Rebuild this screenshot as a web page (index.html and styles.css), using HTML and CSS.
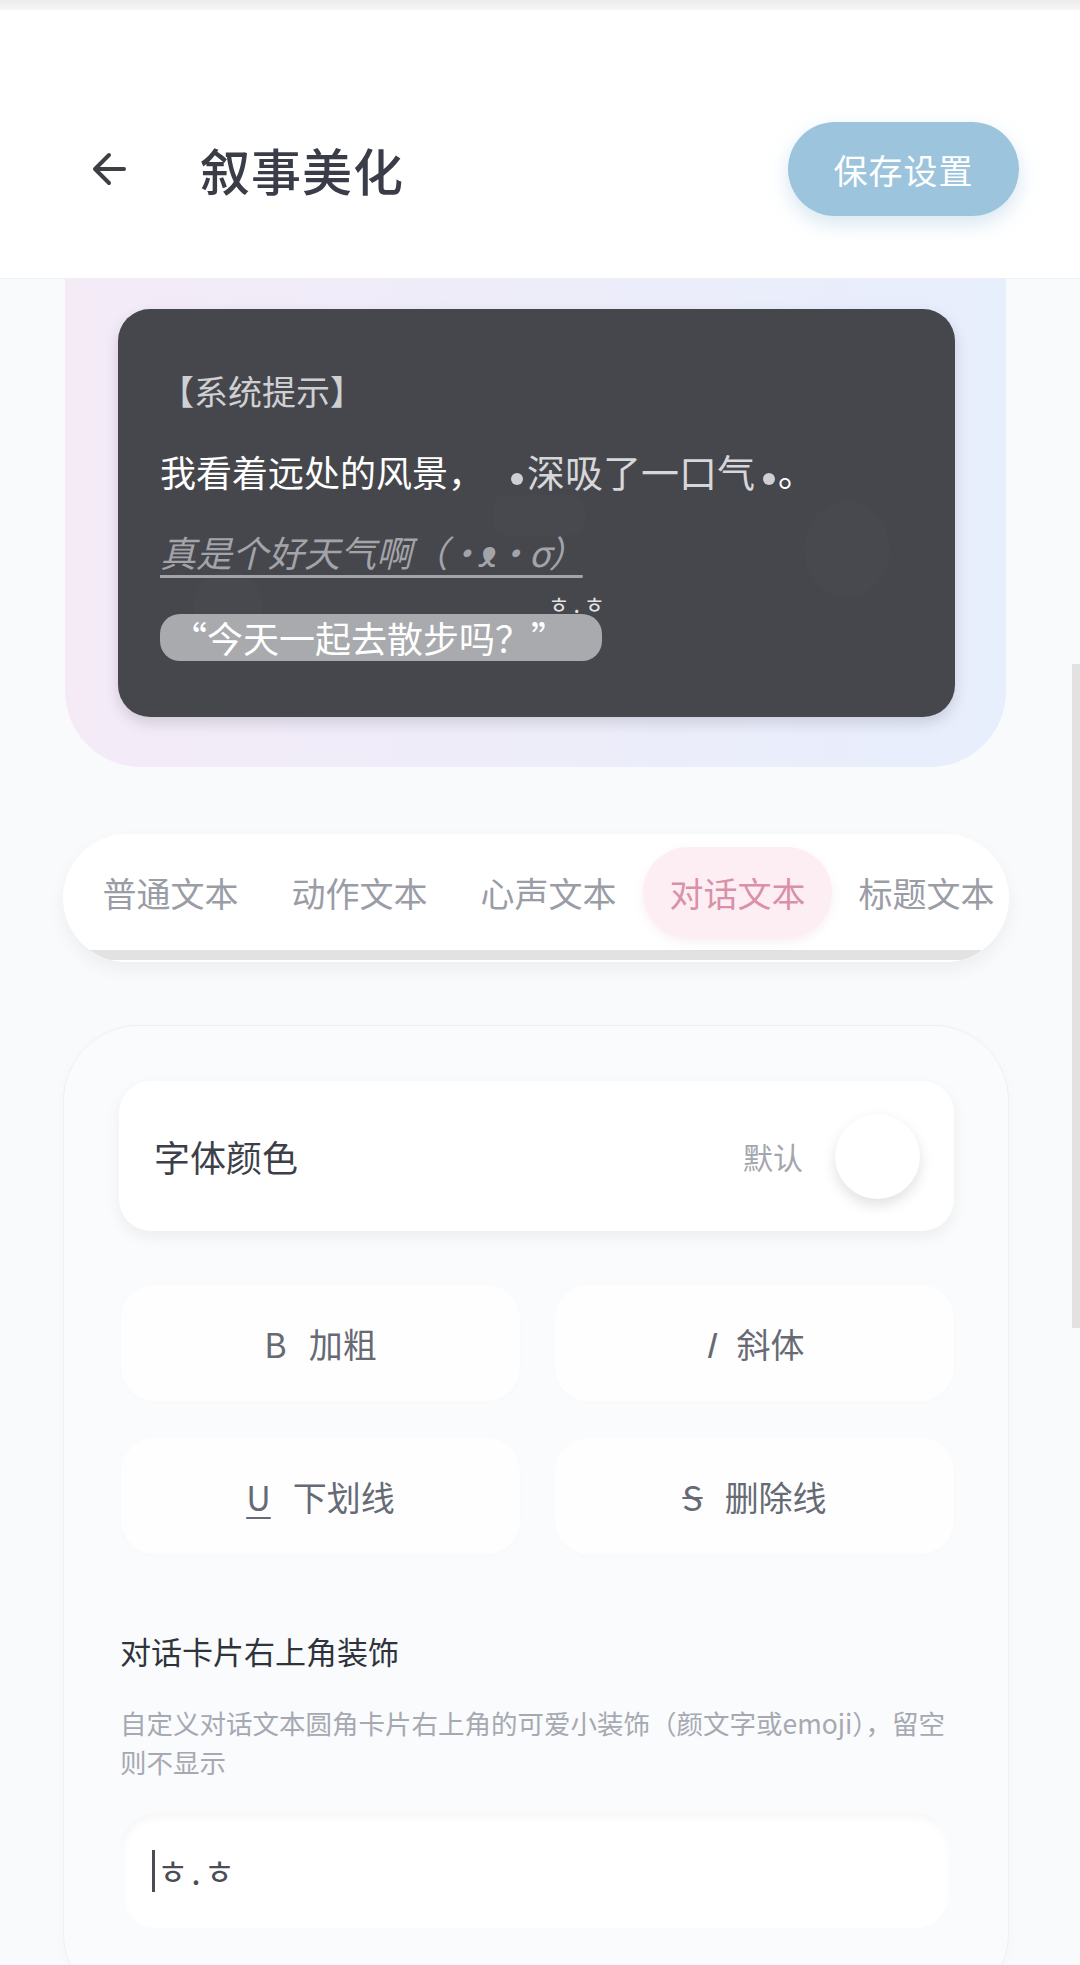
FILE: index.html
```html
<!DOCTYPE html>
<html lang="zh-CN">
<head>
  <meta charset="UTF-8">
  <meta name="viewport" content="width=device-width, initial-scale=1.0">
  <title>叙事美化</title>
  <link rel="stylesheet" href="styles.css">
</head>
<body>
  <div class="statusbar"></div>
  <header class="topbar">
    <svg class="back" width="38" height="38" viewBox="0 0 38 38">
      <path d="M34 19 H6 M19 5 L5 19 L19 33" fill="none" stroke="#3d3f45" stroke-width="4" stroke-linecap="round" stroke-linejoin="round"/>
    </svg>
    <h1 class="title">叙事美化</h1>
    <button class="save">保存设置</button>
  </header>

  <div class="main">
    <section class="preview">
      <div class="story">
        <div class="blob blob1"></div>
        <div class="blob blob2"></div>
        <div class="blob blob3"></div>
        <p class="line system">【系统提示】</p>
        <p class="line normal">我看着远处的风景，<span class="action"><span class="dot first"></span>深吸了一口气<span class="dot last"></span></span>。</p>
        <p class="line thought"><span class="thought-text">真是个好天气啊<span class="kao">（•ᴥ•σ）</span></span></p>
        <p class="line"><span class="bubble">“今天一起去散步吗？”<span class="deco">ㅎ.ㅎ</span></span></p>
      </div>
    </section>

    <nav class="tabs-wrap">
      <div class="tabs">
        <div class="tab">普通文本</div>
        <div class="tab">动作文本</div>
        <div class="tab">心声文本</div>
        <div class="tab active">对话文本</div>
        <div class="tab">标题文本</div>
      </div>
      <div class="hbar"></div>
    </nav>

    <section class="settings">
      <div class="color-row">
        <span class="row-label">字体颜色</span>
        <span class="row-value">默认</span>
        <span class="swatch"></span>
      </div>

      <div class="style-grid">
        <div class="style-btn"><span class="glyph">B</span>加粗</div>
        <div class="style-btn"><span class="glyph italic">I</span>斜体</div>
        <div class="style-btn"><span class="glyph under">U</span>下划线</div>
        <div class="style-btn"><span class="glyph strike">S</span>删除线</div>
      </div>

      <h2 class="field-label">对话卡片右上角装饰</h2>
      <p class="field-hint">自定义对话文本圆角卡片右上角的可爱小装饰（颜文字或emoji），留空则不显示</p>
      <div class="field-input"><span class="caret"></span>ㅎ.ㅎ</div>
    </section>
  </div>

  <div class="vscroll"></div>
</body>
</html>
```

FILE: styles.css
```css
body {
  margin: 0;
  width: 1080px;
  background-color: #f8fafc;
  font-family: "Noto Sans CJK SC", "Noto Sans", sans-serif;
  color: #3c3f48;
}
.statusbar {
  height: 10px;
  background: linear-gradient(#ececec, #f6f6f6);
}
.topbar {
  height: 218px;
  padding: 50px 61px 0 90px;
  background-color: #fff;
  border-bottom: 1px solid #eef0f3;
  display: flex;
  align-items: center;
}
.back {
  flex: none;
}
.title {
  margin: 0 0 0 72px;
  font-size: 50px;
  font-weight: 500;
  letter-spacing: 1px;
  color: #3a3d47;
}
.save {
  margin-left: auto;
  width: 231px;
  height: 94px;
  border: none;
  border-radius: 47px;
  background-color: #9cc4dd;
  color: #fff;
  font-family: inherit;
  font-size: 34px;
  letter-spacing: 1px;
  box-shadow: 0 8px 20px rgba(140, 185, 215, 0.35);
}
.main {
  padding: 0 71px 0 63px;
}
.preview {
  margin: 0 3px 0 2px;
  padding: 30px 51px 50px 53px;
  border-radius: 0 0 76px 76px;
  background: linear-gradient(90deg, #f4ebf7, #e7eefc);
}
.story {
  position: relative;
  overflow: hidden;
  padding: 42px 42px 46px;
  border-radius: 32px;
  background-color: #46474c;
  box-shadow: 0 6px 14px rgba(60, 60, 80, 0.18);
}
.blob {
  position: absolute;
  border-radius: 50%;
  background-color: rgba(255, 255, 255, 0.012);
}
.blob1 {
  left: 686px;
  top: 192px;
  width: 86px;
  height: 96px;
}
.blob2 {
  left: 75px;
  top: 262px;
  width: 70px;
  height: 70px;
}
.blob3 {
  left: 375px;
  top: 186px;
  width: 92px;
  height: 40px;
  border-radius: 12px;
}
.line {
  position: relative;
  margin: 0;
  height: 80px;
  line-height: 80px;
  font-size: 36px;
  color: #fff;
  white-space: nowrap;
}
.system {
  font-size: 34px;
  color: #cfd0d3;
}
.action {
  font-size: 38px;
  color: #d6d7da;
}
.dot {
  display: inline-block;
  width: 12px;
  height: 12px;
  border-radius: 50%;
  background-color: #cfd0d4;
  vertical-align: 2px;
}
.dot.first {
  margin: 0 4px 0 27px;
}
.dot.last {
  margin: 0 3px 0 8px;
}
.thought-text {
  font-style: italic;
  color: #a3a4a9;
  text-decoration: underline;
  text-decoration-thickness: 3px;
  text-underline-offset: 8px;
}
.kao {
  letter-spacing: -2px;
}
.bubble {
  position: relative;
  display: inline-block;
  height: 47px;
  line-height: 47px;
  padding: 0 35px 0 11px;
  border-radius: 20px;
  background-color: #a9aaae;
  vertical-align: middle;
}
.deco {
  position: absolute;
  right: -7px;
  top: -24px;
  font-size: 23px;
  line-height: 26px;
  letter-spacing: 4px;
  color: #e2e2e4;
}
.tabs-wrap {
  margin-top: 67px;
  padding-bottom: 2px;
  border-radius: 64px;
  background-color: #fff;
  box-shadow: 0 8px 18px rgba(0, 0, 0, 0.05);
  overflow: hidden;
}
.tabs {
  display: flex;
  padding: 13px 0 0 13px;
}
.tab {
  flex: none;
  width: 189px;
  height: 91px;
  line-height: 91px;
  text-align: center;
  border-radius: 46px;
  font-size: 34px;
  color: #9a9ca6;
}
.tab.active {
  background-color: #fdeef3;
  color: #d991aa;
  box-shadow: 0 4px 10px rgba(217, 145, 170, 0.15);
}
.hbar {
  height: 10px;
  margin: 12px 25px 0 2px;
  border-radius: 5px;
  background-color: #e2e2e2;
}
.settings {
  margin-top: 63px;
  padding: 55px 54px 80px 55px;
  border: 1px solid #eef1f4;
  border-radius: 76px;
  background-color: #fafbfd;
  box-shadow: 0 4px 16px rgba(0, 0, 0, 0.02);
}
.color-row {
  height: 150px;
  padding: 0 34px 0 35px;
  display: flex;
  align-items: center;
  border-radius: 32px;
  background-color: #fff;
  box-shadow: 0 6px 16px rgba(0, 0, 0, 0.06);
}
.row-label {
  font-size: 36px;
  color: #3c3f48;
}
.row-value {
  margin-left: auto;
  margin-right: 32px;
  font-size: 30px;
  color: #a3a6ae;
}
.swatch {
  width: 85px;
  height: 85px;
  border-radius: 50%;
  background-color: #fff;
  box-shadow: 0 6px 14px rgba(0, 0, 0, 0.12);
}
.style-grid {
  margin-top: 54px;
  padding: 0 0 0 2px;
  display: grid;
  grid-template-columns: 1fr 1fr;
  column-gap: 35px;
  row-gap: 37px;
}
.style-btn {
  height: 116px;
  display: flex;
  align-items: center;
  justify-content: center;
  border-radius: 34px;
  background-color: #fefefe;
  box-shadow: 0 2px 8px rgba(0, 0, 0, 0.012);
  font-size: 34px;
  color: #666a74;
}
.glyph {
  margin-right: 22px;
}
.italic {
  font-style: italic;
}
.under {
  text-decoration: underline;
  text-decoration-thickness: 2px;
  text-underline-offset: 6px;
}
.strike {
  text-decoration: line-through;
  text-decoration-thickness: 2px;
}
.field-label {
  margin: 75px 0 0 1px;
  line-height: 44px;
  font-size: 31px;
  font-weight: 400;
  color: #30333b;
}
.field-hint {
  margin: 30px 0 0 1px;
  line-height: 39px;
  font-size: 26.5px;
  color: #a6a9b1;
}
.field-input {
  margin: 32px 5px 0 2px;
  height: 115px;
  padding-left: 31px;
  display: flex;
  align-items: center;
  border-radius: 34px;
  background-color: #fff;
  box-shadow: inset 2px 5px 9px rgba(0, 0, 0, 0.035);
  font-size: 34px;
  color: #4a4d55;
  letter-spacing: 3px;
}
.caret {
  width: 3px;
  height: 42px;
  margin-right: 2px;
  background-color: #4a4d55;
}
.vscroll {
  position: fixed;
  right: 0;
  top: 664px;
  width: 8px;
  height: 664px;
  background-color: #e2e2e2;
}
```
